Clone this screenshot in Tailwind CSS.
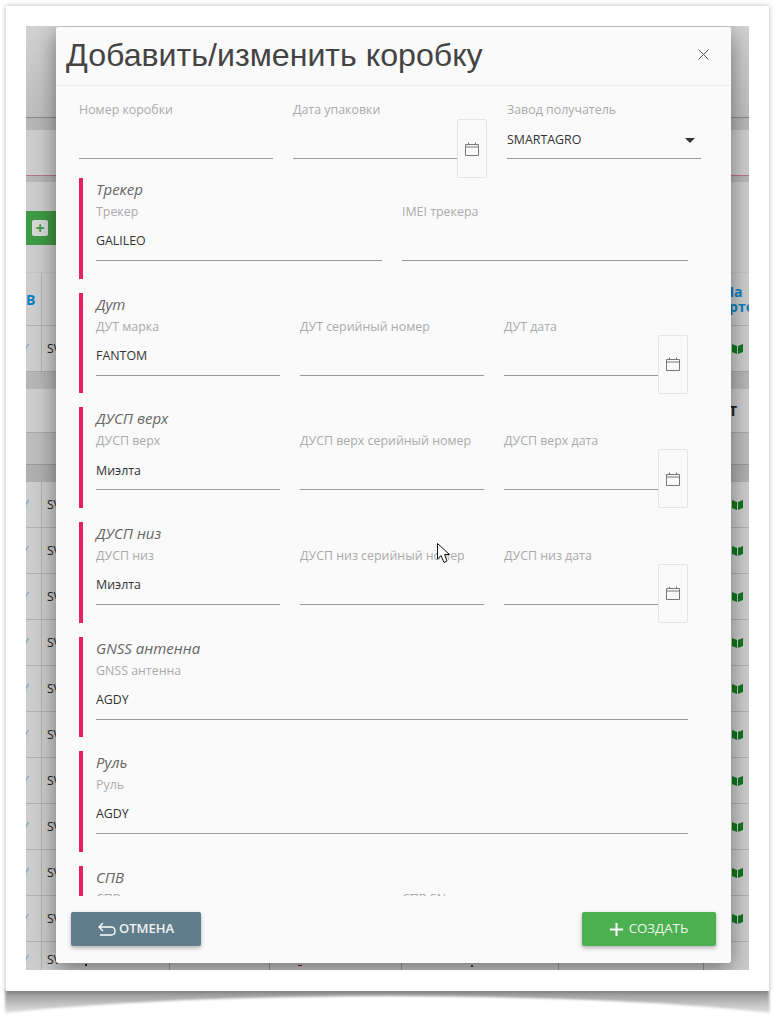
<!DOCTYPE html>
<html lang="ru">
<head>
  <meta charset="UTF-8">
  <title>Добавить/изменить коробку</title>
  <script src="https://cdn.jsdelivr.net/npm/@tailwindcss/browser@4"></script>
</head>
<body class="bg-white h-[1020px] overflow-hidden font-['Open_Sans',sans-serif]">

  <!-- Загнутая тень под листом -->
  <svg class="absolute left-0 top-[985px]" width="783" height="35" viewBox="0 0 783 35">
    <defs>
      <linearGradient id="curl" x1="0" y1="0" x2="0" y2="1">
        <stop offset="0" stop-color="#8f8f8f"/>
        <stop offset="1" stop-color="#e2e2e2"/>
      </linearGradient>
      <filter id="soft"><feGaussianBlur stdDeviation="1.2"/></filter>
    </defs>
    <path d="M5 5 H769 L770 28 Q640 12 385 11 Q150 12 5 28 Z" fill="url(#curl)" filter="url(#soft)"/>
  </svg>

  <!-- Лист со скриншотом -->
  <div class="absolute left-[6px] top-[6px] w-[763px] h-[985px] bg-white p-[20px] shadow-[0_0_5px_rgba(0,0,0,0.3)]">
    <div class="relative h-[944px] overflow-hidden bg-[#c8c8c8] text-[12px]">

      <!-- Страница за диалогом -->
      <div class="h-[92px] bg-gradient-to-b from-[#d2d2d2] to-[#bdbdbd] border-b border-[#8a8a8a]"></div>
      <div class="h-[12px] bg-[#b6b6b6]"></div>
      <div class="h-[46px] bg-[#cdcdcd] border-b border-[#b8758c]"></div>
      <div class="h-[6px] bg-[#b6b6b6]"></div>
      <div class="h-[90px] bg-[#cdcdcd] pt-[29px]">
        <div class="h-[34px] w-[60px] bg-[#3f9a45] flex items-center pl-[6px]">
          <span class="w-[16px] h-[16px] bg-[#d8d8d8] rounded-[2px] flex items-center justify-center text-[#3f9a45] text-[16px] font-bold leading-none">+</span>
        </div>
      </div>
      <div class="h-[54px] bg-[#cdcdcd] border-b border-[#b0b0b0] border-t border-t-[#c4c4c4] flex items-center justify-between">
        <span class="w-[16px] h-full border-r border-[#b0b0b0] flex items-center text-[14px] font-bold text-[#0a7fc0] whitespace-nowrap">В</span>
        <span class="w-[60px] -mr-[14px] text-center text-[14px] leading-[15px] font-bold text-[#0a7fc0]">На<br>карте</span>
      </div>
      <div class="h-[46px] bg-[#cdcdcd] border-b border-[#a8a8a8] flex items-center">
        <span class="w-[16px] h-full border-r border-[#b0b0b0] flex items-center text-[#6f9ab5]"><span class="-ml-[4px]">Y</span></span>
        <span class="pl-[5px] text-[#222]">SV</span>
        <svg class="ml-auto mr-[6px]" width="11" height="10" viewBox="0 0 11 10"><path d="M0 0 L5 2 V10 L0 8 Z M6 2 L11 0 V8 L6 10 Z" fill="#0f7a1e"/></svg>
      </div>
      <div class="h-[17px] bg-[#b6b6b6]"></div>
      <div class="h-[44px] bg-[#cdcdcd] border-b border-[#a8a8a8] flex items-center justify-end">
        <span class="mr-[12px] text-[14px] font-bold text-[#222]">Т</span>
      </div>
      <div class="h-[31px] bg-[#bdbdbd]"></div>
      <div class="h-[18px] bg-[#b0b0b0] border-t border-[#999]"></div>

      <div id="rows"></div>

      <!-- Последняя строка, видна только полоской под диалогом -->
      <div class="h-[46px] bg-[#cdcdcd] flex items-start">
        <span class="w-[16px] h-full border-r border-[#b0b0b0] pt-[9px] text-[#6f9ab5]"><span class="block -ml-[4px]">Y</span></span>
        <span class="w-[128px] h-full border-r border-[#999] flex pl-[5px] pt-[9px] text-[#222]">SV<i class="block ml-[24px] mt-[13px] w-[2px] h-[2px] bg-[#222]"></i></span>
        <span class="w-[100px] h-full border-r border-[#999]"></span>
        <span class="w-[132px] h-full border-r border-[#999] pl-[28px] pt-[23px]"><i class="block w-[4px] h-[1px] bg-[#622]"></i></span>
        <span class="w-[157px] h-full border-r border-[#999] pl-[69px] pt-[23px]"><i class="block w-[2px] h-[2px] bg-[#435]"></i></span>
        <span class="w-[145px] h-full border-r border-[#999]"></span>
      </div>

      <!-- Диалог -->
      <div class="absolute left-[30px] top-[1px] w-[675px] h-[936px] bg-[#fafafa] rounded-[2px] flex flex-col shadow-[0_6px_22px_rgba(0,0,0,0.45)]">
        <header class="h-[59px] shrink-0 border-b border-[#eeeeee] flex items-center justify-between pl-[10px] pr-[22px]">
          <h1 class="font-['Liberation_Sans',sans-serif] text-[32.15px] text-[#444] leading-none -mt-[2px]">Добавить/изменить коробку</h1>
          <svg class="-mt-[3px]" width="11" height="11" viewBox="0 0 11 11" fill="none" stroke="#555" stroke-width="1"><path d="M0.5 0.5 L10.5 10.5 M10.5 0.5 L0.5 10.5"/></svg>
        </header>

        <div class="flex-1 overflow-hidden pl-[23px] pr-[30px] pt-[13px] text-[12.4px]">
          <!-- Верхняя строка -->
          <div class="grid grid-cols-3 gap-x-[20px] h-[79px]">
            <div>
              <div class="h-[20px] leading-[22px] text-[#aaaaaa]">Номер коробки</div>
              <div class="h-[40px] border-b border-[#999]"></div>
            </div>
            <div>
              <div class="h-[20px] leading-[22px] text-[#aaaaaa]">Дата упаковки</div>
              <div class="flex items-start">
                <div class="flex-1 h-[40px] border-b border-[#999]"></div>
                <button class="w-[30px] h-[59px] border border-[#e4e4e4] rounded-[2px] flex items-center justify-center">
                  <svg width="14" height="14" viewBox="0 0 14 14" fill="none" stroke="#777"><path d="M0.5 2.5 H13.5 V13.5 H0.5 Z M0.5 5 H13.5 M3.5 0.5 V2.5 M10.5 0.5 V2.5"/></svg>
                </button>
              </div>
            </div>
            <div>
              <div class="h-[20px] leading-[22px] text-[#aaaaaa]">Завод получатель</div>
              <div class="h-[40px] border-b border-[#999] flex items-center justify-between text-[#333] pr-[6px] pt-[3px]">SMARTAGRO
                <svg width="10" height="5" viewBox="0 0 10 5"><path d="M0 0 H10 L5 5 Z" fill="#333"/></svg>
              </div>
            </div>
          </div>

          <!-- Трекер -->
          <section class="h-[100.67px] mb-[14px] border-l-4 border-[#e91e63] pl-[13px] pr-[13px]">
            <h3 class="h-[24px] italic text-[15px] text-[#666]">Трекер</h3>
            <div class="grid grid-cols-2 gap-x-[20px]">
              <div>
                <div class="h-[20px] leading-[19px] text-[#aaaaaa]">Трекер</div>
                <div class="h-[39px] border-b border-[#999] flex items-center text-[#333]">GALILEO</div>
              </div>
              <div>
                <div class="h-[20px] leading-[19px] text-[#aaaaaa]">IMEI трекера</div>
                <div class="h-[39px] border-b border-[#999]"></div>
              </div>
            </div>
          </section>

          <!-- Дут -->
          <section class="h-[100.67px] mb-[14px] border-l-4 border-[#e91e63] pl-[13px] pr-[13px]">
            <h3 class="h-[24px] italic text-[15px] text-[#666]">Дут</h3>
            <div class="grid grid-cols-3 gap-x-[20px]">
              <div>
                <div class="h-[20px] leading-[19px] text-[#aaaaaa]">ДУТ марка</div>
                <div class="h-[39px] border-b border-[#999] flex items-center pt-[1px] text-[#333]">FANTOM</div>
              </div>
              <div>
                <div class="h-[20px] leading-[19px] text-[#aaaaaa]">ДУТ серийный номер</div>
                <div class="h-[39px] border-b border-[#999]"></div>
              </div>
              <div>
                <div class="h-[20px] leading-[19px] text-[#aaaaaa]">ДУТ дата</div>
                <div class="flex items-start">
                  <div class="flex-1 h-[39px] border-b border-[#999]"></div>
                  <button class="w-[30px] h-[59px] -mt-[2px] border border-[#e4e4e4] rounded-[2px] flex items-center justify-center">
                    <svg width="14" height="14" viewBox="0 0 14 14" fill="none" stroke="#777"><path d="M0.5 2.5 H13.5 V13.5 H0.5 Z M0.5 5 H13.5 M3.5 0.5 V2.5 M10.5 0.5 V2.5"/></svg>
                  </button>
                </div>
              </div>
            </div>
          </section>

          <!-- ДУСП верх -->
          <section class="h-[100.67px] mb-[14px] border-l-4 border-[#e91e63] pl-[13px] pr-[13px]">
            <h3 class="h-[24px] italic text-[15px] text-[#666]">ДУСП верх</h3>
            <div class="grid grid-cols-3 gap-x-[20px]">
              <div>
                <div class="h-[20px] leading-[19px] text-[#aaaaaa]">ДУСП верх</div>
                <div class="h-[39px] border-b border-[#999] flex items-center pt-[1px] text-[#333]">Миэлта</div>
              </div>
              <div>
                <div class="h-[20px] leading-[19px] text-[#aaaaaa]">ДУСП верх серийный номер</div>
                <div class="h-[39px] border-b border-[#999]"></div>
              </div>
              <div>
                <div class="h-[20px] leading-[19px] text-[#aaaaaa]">ДУСП верх дата</div>
                <div class="flex items-start">
                  <div class="flex-1 h-[39px] border-b border-[#999]"></div>
                  <button class="w-[30px] h-[59px] -mt-[2px] border border-[#e4e4e4] rounded-[2px] flex items-center justify-center">
                    <svg width="14" height="14" viewBox="0 0 14 14" fill="none" stroke="#777"><path d="M0.5 2.5 H13.5 V13.5 H0.5 Z M0.5 5 H13.5 M3.5 0.5 V2.5 M10.5 0.5 V2.5"/></svg>
                  </button>
                </div>
              </div>
            </div>
          </section>

          <!-- ДУСП низ -->
          <section class="h-[100.67px] mb-[14px] border-l-4 border-[#e91e63] pl-[13px] pr-[13px]">
            <h3 class="h-[24px] italic text-[15px] text-[#666]">ДУСП низ</h3>
            <div class="grid grid-cols-3 gap-x-[20px]">
              <div>
                <div class="h-[20px] leading-[19px] text-[#aaaaaa]">ДУСП низ</div>
                <div class="h-[39px] border-b border-[#999] flex items-center text-[#333]">Миэлта</div>
              </div>
              <div>
                <div class="h-[20px] leading-[19px] text-[#aaaaaa]">ДУСП низ серийный номер</div>
                <div class="h-[39px] border-b border-[#999]"></div>
              </div>
              <div>
                <div class="h-[20px] leading-[19px] text-[#aaaaaa]">ДУСП низ дата</div>
                <div class="flex items-start">
                  <div class="flex-1 h-[39px] border-b border-[#999]"></div>
                  <button class="w-[30px] h-[59px] -mt-[2px] border border-[#e4e4e4] rounded-[2px] flex items-center justify-center">
                    <svg width="14" height="14" viewBox="0 0 14 14" fill="none" stroke="#777"><path d="M0.5 2.5 H13.5 V13.5 H0.5 Z M0.5 5 H13.5 M3.5 0.5 V2.5 M10.5 0.5 V2.5"/></svg>
                  </button>
                </div>
              </div>
            </div>
          </section>

          <!-- GNSS антенна -->
          <section class="h-[100.67px] mb-[14px] border-l-4 border-[#e91e63] pl-[13px] pr-[13px]">
            <h3 class="h-[24px] italic text-[15px] text-[#666]">GNSS антенна</h3>
            <div class="h-[20px] leading-[19px] text-[#aaaaaa]">GNSS антенна</div>
            <div class="h-[39px] border-b border-[#999] flex items-center pt-[1px] text-[#333]">AGDY</div>
          </section>

          <!-- Руль -->
          <section class="h-[100.67px] mb-[14px] border-l-4 border-[#e91e63] pl-[13px] pr-[13px]">
            <h3 class="h-[24px] italic text-[15px] text-[#666]">Руль</h3>
            <div class="h-[20px] leading-[19px] text-[#aaaaaa]">Руль</div>
            <div class="h-[39px] border-b border-[#999] flex items-center text-[#333]">AGDY</div>
          </section>

          <!-- СПВ -->
          <section class="h-[100.67px] border-l-4 border-[#e91e63] pl-[13px] pr-[13px]">
            <h3 class="h-[24px] italic text-[15px] text-[#666]">СПВ</h3>
            <div class="grid grid-cols-2 gap-x-[20px]">
              <div class="text-[#aaaaaa]">СПВ</div>
              <div class="text-[#aaaaaa]">СПВ SN</div>
            </div>
          </section>
        </div>

        <footer class="h-[67px] shrink-0 flex items-start justify-between pt-[16px] pl-[15px] pr-[15px]">
          <button class="w-[130px] h-[34px] bg-[#607d8b] text-white/90 rounded-[2px] text-[13px] font-semibold flex items-center justify-center gap-[3px] shadow-[0_2px_4px_rgba(0,0,0,0.3)]">
            <svg width="18" height="14" viewBox="0 0 18 14" fill="none" stroke="#fff" stroke-width="1.3"><path d="M5 1 L1 5 L5 9 M1 5 H13 Q17 5 17 9 Q17 13 13 13 H2"/></svg>
            ОТМЕНА
          </button>
          <button class="w-[134px] h-[34px] bg-[#4caf50] text-white/90 rounded-[2px] text-[13.3px] font-medium flex items-center justify-center gap-[6px] shadow-[0_2px_4px_rgba(0,0,0,0.3)]">
            <svg width="13" height="13" viewBox="0 0 13 13" fill="none" stroke="#fff" stroke-width="2"><path d="M6.5 0 V13 M0 6.5 H13"/></svg>
            СОЗДАТЬ
          </button>
        </footer>
      </div>

      <!-- Курсор мыши -->
      <svg class="absolute left-[411px] top-[517px]" width="14" height="21" viewBox="0 0 14 21"><path d="M0.5 0.5 V16 L4 12.5 L7 19.5 L10 18 L7.5 11.5 L12.5 11.5 Z" fill="#fff" stroke="#111"/></svg>
    </div>
  </div>

  <script>
    // Строки таблицы за диалогом
    const rows = document.getElementById("rows");
    for (let i = 0; i < 10; i++) {
      rows.innerHTML += `
        <div class="h-[46px] bg-[#cdcdcd] border-b border-[#b0b0b0] flex items-center">
          <span class="w-[16px] h-full border-r border-[#b0b0b0] flex items-center text-[#6f9ab5]"><span class="-ml-[4px]">Y</span></span>
          <span class="w-[128px] h-full border-r border-[#999] flex items-center pl-[5px] text-[#222]">SV</span>
          <svg class="ml-auto mr-[6px]" width="11" height="10" viewBox="0 0 11 10"><path d="M0 0 L5 2 V10 L0 8 Z M6 2 L11 0 V8 L6 10 Z" fill="#0f7a1e"/></svg>
        </div>`;
    }
  </script>
</body>
</html>
